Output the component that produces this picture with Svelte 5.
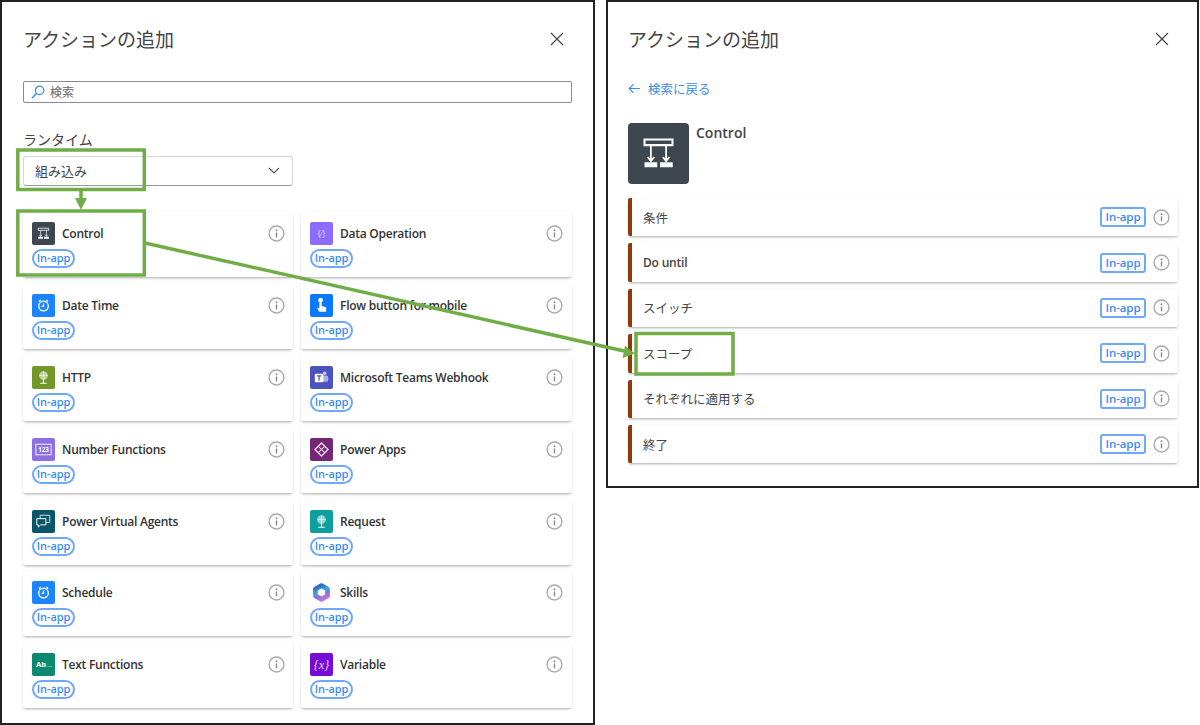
<script>
  const connectors = [
    { name: "Control", icon: "control", color: "#3e4650" },
    { name: "Data Operation", icon: "data", color: "#8c6cff" },
    { name: "Date Time", icon: "clock", color: "#1a85ff" },
    { name: "Flow button for mobile", icon: "touch", color: "#0a78ff" },
    { name: "HTTP", icon: "globe", color: "#709727" },
    { name: "Microsoft Teams Webhook", icon: "teams", color: "#4b53bc" },
    { name: "Number Functions", icon: "number", color: "#8c6fe0" },
    { name: "Power Apps", icon: "apps", color: "#742774" },
    { name: "Power Virtual Agents", icon: "chat", color: "#0b556a" },
    { name: "Request", icon: "globe", color: "#0f9d9d" },
    { name: "Schedule", icon: "clock", color: "#1a85ff" },
    { name: "Skills", icon: "skills", color: "transparent" },
    { name: "Text Functions", icon: "text", color: "#0b8a6f" },
    { name: "Variable", icon: "variable", color: "#770bd6" },
  ];
  const actions = ["条件", "Do until", "スイッチ", "スコープ", "それぞれに適用する", "終了"];
</script>

{#snippet info()}
  <svg class="info" viewBox="0 0 16 16" aria-hidden="true">
    <circle cx="8" cy="8" r="7" fill="none" stroke="#aaa" stroke-width="1.3" />
    <circle cx="8" cy="4.9" r="0.9" fill="#888" />
    <path d="M8 7v4.6" stroke="#888" stroke-width="1.3" fill="none" />
  </svg>
{/snippet}

{#snippet controlGlyph()}
  <path d="M6.5 6.5h11v2.2h-11z" fill="none" stroke="#fff" stroke-width="0.8" />
  <path d="M9 8.7v6.3M15 8.7v6.3M7.7 13.4 9 15l1.3-1.6M13.7 13.4 15 15l1.3-1.6" fill="none" stroke="#fff" stroke-width="0.7" />
  <path d="M6.5 15.4h5v2h-5zM12.6 15.4h5v2h-5z" fill="#fff" />
{/snippet}

{#snippet glyph(icon)}
  {#if icon === "control"}
    {@render controlGlyph()}
  {:else if icon === "data"}
    <text x="12" y="15.5" class="gl" fill="#d9ccff" font-size="10">&#123;&#8260;&#125;</text>
  {:else if icon === "clock"}
    <circle cx="12" cy="12.6" r="5" fill="none" stroke="#fff" stroke-width="1.4" />
    <path d="M12 10v2.8h-2M7.2 7.8l2-1.6M16.8 7.8l-2-1.6" fill="none" stroke="#fff" stroke-width="1.3" />
  {:else if icon === "touch"}
    <circle cx="11" cy="6.4" r="2.4" fill="#fff" />
    <path d="M9.8 8.5h2.4v4l4.6 1.2v4.8H9.6l-2.2-4.2 2.4.3z" fill="#fff" />
  {:else if icon === "globe"}
    <circle cx="12" cy="10" r="4.6" fill="#fff" fill-opacity="0.55" />
    <path d="M7.6 10h8.8M12 5.4v9.2" stroke="#fff" stroke-width="0.6" fill="none" />
    <path d="M12 14.6v3M8.6 18h6.8" stroke="#fff" stroke-width="1.2" fill="none" />
  {:else if icon === "teams"}
    <circle cx="15.4" cy="7.6" r="1.8" fill="#c5cbfa" />
    <rect x="13" y="10" width="6" height="6.5" rx="2" fill="#a9b0f2" />
    <rect x="5" y="8" width="9" height="9" rx="1" fill="#fff" />
    <path d="M7.3 10.4h4.4M9.5 10.4v4.6" stroke="#4b53bc" stroke-width="1.3" />
  {:else if icon === "number"}
    <rect x="4" y="6.5" width="16" height="11" fill="none" stroke="#e4dcfa" stroke-width="1.2" />
    <text x="12" y="14.7" class="gl" fill="#fff" font-size="6.5" font-weight="700">123</text>
  {:else if icon === "apps"}
    <path d="M12 5.2 18.8 12 12 18.8 5.2 12z" fill="none" stroke="#e9cfe9" stroke-width="1.5" />
    <path d="M9 9l6 6M15 9l-6 6" stroke="#e9cfe9" stroke-width="1.2" />
  {:else if icon === "chat"}
    <path d="M8.5 5.5h10v7.5h-10z" fill="none" stroke="#cde4ea" stroke-width="1" />
    <path d="M5 9h9.5v6.5H9l-2.4 2.4v-2.4H5z" fill="#0b556a" stroke="#fff" stroke-width="1" />
  {:else if icon === "skills"}
    <defs>
      <linearGradient id="skillsGrad" x1="0.2" y1="0" x2="0.6" y2="1">
        <stop offset="0" stop-color="#2f63c8" />
        <stop offset="0.45" stop-color="#43a6e4" />
        <stop offset="0.7" stop-color="#8a6ee0" />
        <stop offset="1" stop-color="#b77bd8" />
      </linearGradient>
    </defs>
    <path d="M12 4.8 18.3 8.4v7.2L12 19.2 5.7 15.6V8.4z" fill="none" stroke="url(#skillsGrad)" stroke-width="5" stroke-linejoin="round" />
  {:else if icon === "text"}
    <text x="9.5" y="14.5" class="gl" fill="#fff" font-size="8" font-weight="700">Ab</text>
    <text x="18.5" y="14.5" class="gl" fill="#d5efe8" font-size="7">...</text>
  {:else if icon === "variable"}
    <text x="12" y="16.5" class="gl var" fill="#e7d5fb" font-size="13">&#123;x&#125;</text>
  {/if}
{/snippet}

<div class="page">
  <section class="panel left">
    <header class="head">
      <h2>アクションの追加</h2>
      <svg class="close" viewBox="0 0 14 14" aria-hidden="true"><path d="M1 1l12 12M13 1 1 13" stroke="#444" stroke-width="1.2" fill="none" /></svg>
    </header>

    <div class="search">
      <svg class="lens" viewBox="0 0 14 14" aria-hidden="true">
        <circle cx="8.6" cy="5.4" r="4.2" fill="none" stroke="#3b8ee0" stroke-width="1.3" />
        <path d="M5.6 8.4 1 13" stroke="#3b8ee0" stroke-width="1.4" fill="none" />
      </svg>
      <span>検索</span>
    </div>

    <div class="label">ランタイム</div>
    <div class="select">
      <span>組み込み</span>
      <svg class="chevron" viewBox="0 0 12 7" aria-hidden="true"><path d="M1 1l5 5 5-5" stroke="#555" stroke-width="1.1" fill="none" /></svg>
    </div>

    <div class="grid">
      {#each connectors as c}
        <article class="card">
          <div class="card-top">
            <svg class="tile" viewBox="0 0 24 24" aria-hidden="true" style:background={c.color}>
              {@render glyph(c.icon)}
            </svg>
            <span class="name">{c.name}</span>
            {@render info()}
          </div>
          <span class="pill">In-app</span>
        </article>
      {/each}
    </div>
  </section>

  <section class="panel right">
    <header class="head">
      <h2>アクションの追加</h2>
      <svg class="close" viewBox="0 0 14 14" aria-hidden="true"><path d="M1 1l12 12M13 1 1 13" stroke="#444" stroke-width="1.2" fill="none" /></svg>
    </header>

    <div class="back">
      <svg class="arrow-left" viewBox="0 0 14 12" aria-hidden="true"><path d="M13 6H1.5M6 1.2 1.2 6 6 10.8" stroke="#3b8ee0" stroke-width="1.2" fill="none" /></svg>
      <span>検索に戻る</span>
    </div>

    <div class="summary">
      <svg class="big-tile" viewBox="0 0 24 24" aria-hidden="true">
        {@render controlGlyph()}
      </svg>
      <span class="summary-name">Control</span>
    </div>

    <div class="rows">
      {#each actions as a}
        <div class="row">
          <span class="row-name" class:latin={a === "Do until"}>{a}</span>
          <span class="tag">In-app</span>
          {@render info()}
        </div>
      {/each}
    </div>
  </section>

  <svg class="callouts" viewBox="0 0 1200 725" aria-hidden="true">
    <g fill="none" stroke="#70ad47" stroke-width="3.5">
      <rect x="17.8" y="150" width="126.5" height="39.5" />
      <rect x="17.8" y="211" width="126.5" height="64" />
      <rect x="636" y="333.5" width="97" height="40.5" />
      <path d="M81 190v9" />
      <path d="M145 243 624 351" />
    </g>
    <path d="M75 198h12l-6 12z" fill="#70ad47" />
    <path d="M635 353.6 622.6 358 625 345.8z" fill="#70ad47" />
  </svg>
</div>

<style>
  :global(body) {
    margin: 0;
    background: #fff;
  }
  .page {
    position: relative;
    display: flex;
    align-items: flex-start;
    gap: 11px;
    width: 1200px;
    height: 725px;
    overflow: hidden;
    font-family: "Open Sans", "Noto Sans CJK JP", sans-serif;
    color: #333;
  }
  .panel {
    box-sizing: border-box;
    border: 2px solid #222;
    background: #fff;
    flex: none;
  }
  .left {
    width: 595px;
    height: 725px;
    padding: 0 21px;
  }
  .right {
    width: 593px;
    height: 488px;
    padding: 0 20px;
  }
  .head {
    display: flex;
    align-items: center;
    justify-content: space-between;
    height: 73px;
    padding-right: 8px;
  }
  h2 {
    margin: 0;
    font-size: 19px;
    font-weight: 400;
    color: #444;
  }
  .close {
    width: 14px;
    height: 14px;
  }
  .search {
    box-sizing: border-box;
    display: flex;
    align-items: center;
    gap: 5px;
    margin-top: 6px;
    width: 549px;
    height: 22px;
    padding-left: 7px;
    border: 1px solid #8a8a8a;
    border-radius: 2px;
    font-size: 12px;
    color: #666;
  }
  .lens {
    width: 14px;
    height: 14px;
  }
  .label {
    margin-top: 27px;
    height: 20px;
    line-height: 20px;
    font-size: 14px;
    color: #444;
  }
  .select {
    box-sizing: border-box;
    display: flex;
    align-items: center;
    justify-content: space-between;
    margin-top: 6px;
    width: 270px;
    height: 30px;
    padding: 0 12px 1px 11px;
    border: 1px solid #d6d6d6;
    border-bottom-color: #999;
    border-radius: 3px;
    font-size: 13px;
    color: #444;
  }
  .chevron {
    width: 12px;
    height: 7px;
  }
  .grid {
    display: grid;
    grid-template-columns: 270px 271px;
    grid-auto-rows: 65px;
    column-gap: 8px;
    row-gap: 6.9px;
    margin-top: 26px;
  }
  .card {
    box-sizing: border-box;
    padding: 10px 9px 0;
    border-radius: 2px;
    background: #fff;
    box-shadow: 0 2px 3px -1px rgba(0, 0, 0, 0.32), 0 0 2px rgba(0, 0, 0, 0.07);
  }
  .card:nth-child(odd) .info {
    margin-right: -1px;
  }
  .card-top {
    display: flex;
    align-items: center;
    height: 23px;
  }
  .tile {
    width: 23px;
    height: 23px;
    flex: none;
    border-radius: 2px;
  }
  .gl {
    font-family: "Open Sans", sans-serif;
    text-anchor: middle;
  }
  .var {
    font-family: "Liberation Serif", serif;
    font-style: italic;
  }
  .name {
    flex: 1;
    margin-left: 7px;
    font-size: 12px;
    font-weight: 600;
    letter-spacing: -0.25px;
    color: #333;
    white-space: nowrap;
  }
  .info {
    width: 17px;
    height: 17px;
    flex: none;
  }
  .pill {
    box-sizing: border-box;
    display: block;
    width: 43px;
    height: 19px;
    margin-top: 4px;
    border: 2px solid #6ea8ff;
    border-radius: 10px;
    line-height: 14px;
    font-size: 11px;
    font-weight: 600;
    letter-spacing: -0.1px;
    text-align: center;
    color: #3d8bf5;
  }
  .back {
    display: flex;
    align-items: center;
    gap: 7px;
    margin-top: 2px;
    height: 22px;
    font-size: 12.5px;
    color: #3b8ee0;
  }
  .arrow-left {
    width: 13px;
    height: 11px;
  }
  .summary {
    display: flex;
    align-items: flex-start;
    gap: 7px;
    margin-top: 24px;
  }
  .big-tile {
    width: 61px;
    height: 61px;
    border-radius: 4px;
    background: #3e4650;
  }
  .summary-name {
    font-size: 14px;
    font-weight: 600;
    color: #444;
    line-height: 20px;
  }
  .rows {
    display: flex;
    flex-direction: column;
    gap: 7px;
    width: 550px;
    margin-top: 14px;
  }
  .row {
    box-sizing: border-box;
    display: flex;
    align-items: center;
    height: 38.4px;
    padding: 0 8px 0 11px;
    border-left: 4px solid #8f3a0a;
    border-radius: 2px;
    background: #fff;
    box-shadow: 0 2px 3px -1px rgba(0, 0, 0, 0.32), 0 0 2px rgba(0, 0, 0, 0.07);
  }
  .row-name {
    flex: 1;
    font-size: 12.5px;
    color: #444;
  }
  .latin {
    font-size: 12px;
    font-weight: 600;
    letter-spacing: -0.2px;
  }
  .tag {
    box-sizing: border-box;
    width: 46px;
    height: 20px;
    margin-right: 7px;
    border: 2px solid #6ea8ff;
    border-radius: 3px;
    line-height: 15px;
    font-size: 11.5px;
    font-weight: 600;
    letter-spacing: -0.1px;
    text-align: center;
    color: #3d8bf5;
  }
  .callouts {
    position: absolute;
    inset: 0;
    width: 1200px;
    height: 725px;
    pointer-events: none;
  }
</style>
